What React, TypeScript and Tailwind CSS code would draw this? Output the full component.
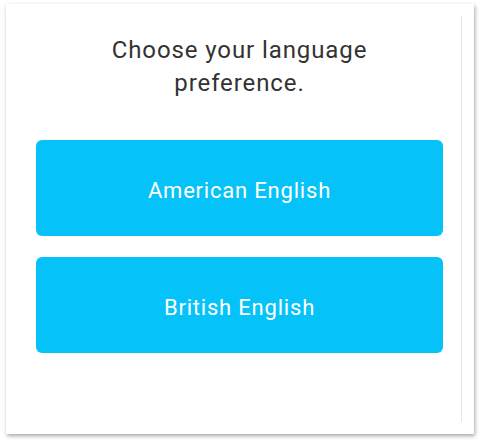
import React from "react";

export default function App() {
  return (
    <div className="w-[480px] h-[443px] bg-white pt-[4px] pl-[6px]" style={{ fontFamily: "Roboto, 'Liberation Sans', sans-serif" }}>
      <div className="w-[468px] h-[430px] bg-white shadow-[1px_2px_4px_rgba(0,0,0,0.35)] pt-[12px] pl-[10px]">
        <div className="w-[446px] h-[406px] border-r border-[#e6e6e6] pl-[20px] pr-[18px] pt-[18px]">
          <h1 className="text-center text-[24px] leading-[33px] font-normal text-[#333333] tracking-[0.9px]">
            Choose your language
            <br />
            preference.
          </h1>
          <div className="mt-[40px] flex flex-col gap-[21px]">
            <button className="h-[96px] w-full rounded-[6px] bg-[#05c3f9] text-white text-[22px] font-normal tracking-[0.8px] pt-[4px]">
              American English
            </button>
            <button className="h-[96px] w-full rounded-[6px] bg-[#05c3f9] text-white text-[22px] font-normal tracking-[0.8px] pt-[4px]">
              British English
            </button>
          </div>
        </div>
      </div>
    </div>
  );
}
